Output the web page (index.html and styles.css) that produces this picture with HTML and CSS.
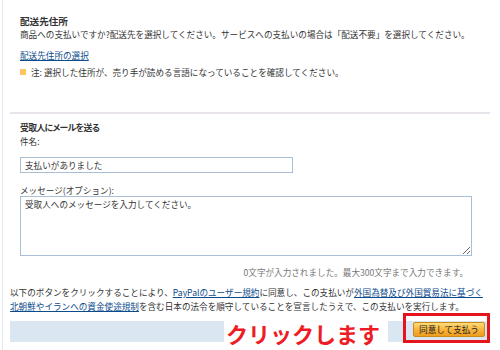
FILE: index.html
```html
<!DOCTYPE html>
<html lang="ja">
<head>
    <meta charset="UTF-8">
    <meta name="viewport" content="width=device-width, initial-scale=1.0">
    <title>支払いの確認</title>
    <link rel="stylesheet" href="styles.css">
</head>
<body>
    <div class="page">
        <!-- 配送先 -->
        <div class="section shipping">
            <h2>配送先住所</h2>
            <p class="lead">商品への支払いですか?配送先を選択してください。サービスへの支払いの場合は「配送不要」を選択してください。</p>
            <a class="choose-link" href="#">配送先住所の選択</a>
            <div class="note">
                <span class="note-mark"></span>
                <span>注: 選択した住所が、売り手が読める言語になっていることを確認してください。</span>
            </div>
        </div>

        <div class="divider"></div>

        <!-- メール -->
        <div class="section mail">
            <h2 class="mail-title">受取人にメールを送る</h2>
            <div class="field-label">件名:</div>
            <input type="text" class="subject-input" value="支払いがありました">
            <div class="field-label message-label">メッセージ(オプション):</div>
            <textarea class="message-box">受取人へのメッセージを入力してください。</textarea>
            <div class="count">0文字が入力されました。最大300文字まで入力できます。</div>
        </div>

        <p class="agree">以下のボタンをクリックすることにより、<a href="#">PayPalのユーザー規約</a>に同意し、この支払いが<a href="#">外国為替及び外国貿易法に基づく</a><br><a href="#">北朝鮮やイランへの資金使途規制</a>を含む日本の法令を順守していることを宣言したうえで、この支払いを実行します。</p>

        <div class="pay-bar">
            <span class="click-callout">クリックします</span>
            <button class="pay-button">同意して支払う</button>
            <span class="highlight"></span>
        </div>
    </div>
</body>
</html>
```

FILE: styles.css
```css
body {
    margin: 0;
    padding-left: 2px;
    font-family: "Noto Sans CJK JP", "Liberation Sans", sans-serif;
    font-size: 8.6px;
    color: #333;
    background-color: #fff;
}

.page {
    min-height: 350px;
    border-left: 1px solid #e2e8ef;
}

a {
    color: #0b4a8b;
    text-decoration: underline;
}

.section {
    padding-left: 17px;
}

.shipping {
    padding-top: 14px;
}

h2 {
    margin: 0;
    font-size: 9.6px;
    font-weight: bold;
    line-height: 14px;
    color: #333;
}

.lead {
    margin: 0;
    line-height: 12px;
}

.choose-link {
    display: inline-block;
    margin-top: 9px;
    line-height: 12px;
}

.note {
    display: flex;
    align-items: center;
    gap: 5px;
    margin-top: 5px;
    line-height: 12px;
}

.note-mark {
    width: 6px;
    height: 6px;
    background-color: #fcc660;
}

.divider {
    width: 480px;
    height: 2px;
    margin: 34px 0 0 7px;
    background-color: #e9e3ec;
}

.mail-title {
    margin-top: 7px;
    font-size: 8.8px;
    letter-spacing: -0.6px;
    font-feature-settings: "palt";
}

.field-label {
    line-height: 12px;
}

.subject-input {
    display: block;
    box-sizing: border-box;
    width: 273px;
    height: 16px;
    margin: 10px 0 0;
    padding: 0 4px;
    border: 1px solid #a9bfd6;
    font: inherit;
    color: #333;
    outline: none;
}

.message-label {
    margin-top: 11px;
}

.message-box {
    display: block;
    box-sizing: border-box;
    width: 452px;
    height: 60px;
    margin: 0;
    padding: 1px 4px;
    border: 1px solid #a9bfd6;
    font: inherit;
    line-height: 12px;
    color: #333;
    outline: none;
}

.count {
    width: 448px;
    margin-top: 10px;
    line-height: 12px;
    text-align: right;
    color: #777;
}

.agree {
    margin: 7px 0 0;
    padding-left: 7px;
    line-height: 14px;
}

.pay-bar {
    position: relative;
    display: flex;
    justify-content: flex-end;
    align-items: flex-start;
    width: 480px;
    height: 21px;
    margin: 8px 0 0 7px;
    background-color: #dae6f2;
}

.pay-button {
    width: 72px;
    height: 15px;
    margin: 1px 5px 0 0;
    padding: 0;
    border: 1px solid #c98a1a;
    border-radius: 2px;
    background: linear-gradient(#ffdc78, #f7b23a 55%, #ef9d1c);
    font: inherit;
    line-height: 13px;
    color: #222;
}

/* 注釈: 赤い文字と枠 */
.click-callout {
    position: absolute;
    left: 214px;
    top: -2px;
    width: 164px;
    height: 28px;
    padding-left: 2px;
    box-sizing: border-box;
    background-color: #fff;
    font-size: 22px;
    font-weight: bold;
    line-height: 28px;
    color: #ee1c24;
    white-space: nowrap;
}

.highlight {
    position: absolute;
    left: 393px;
    top: -8px;
    width: 87px;
    height: 30px;
    box-sizing: border-box;
    border: 3px solid #e4141c;
}
```
